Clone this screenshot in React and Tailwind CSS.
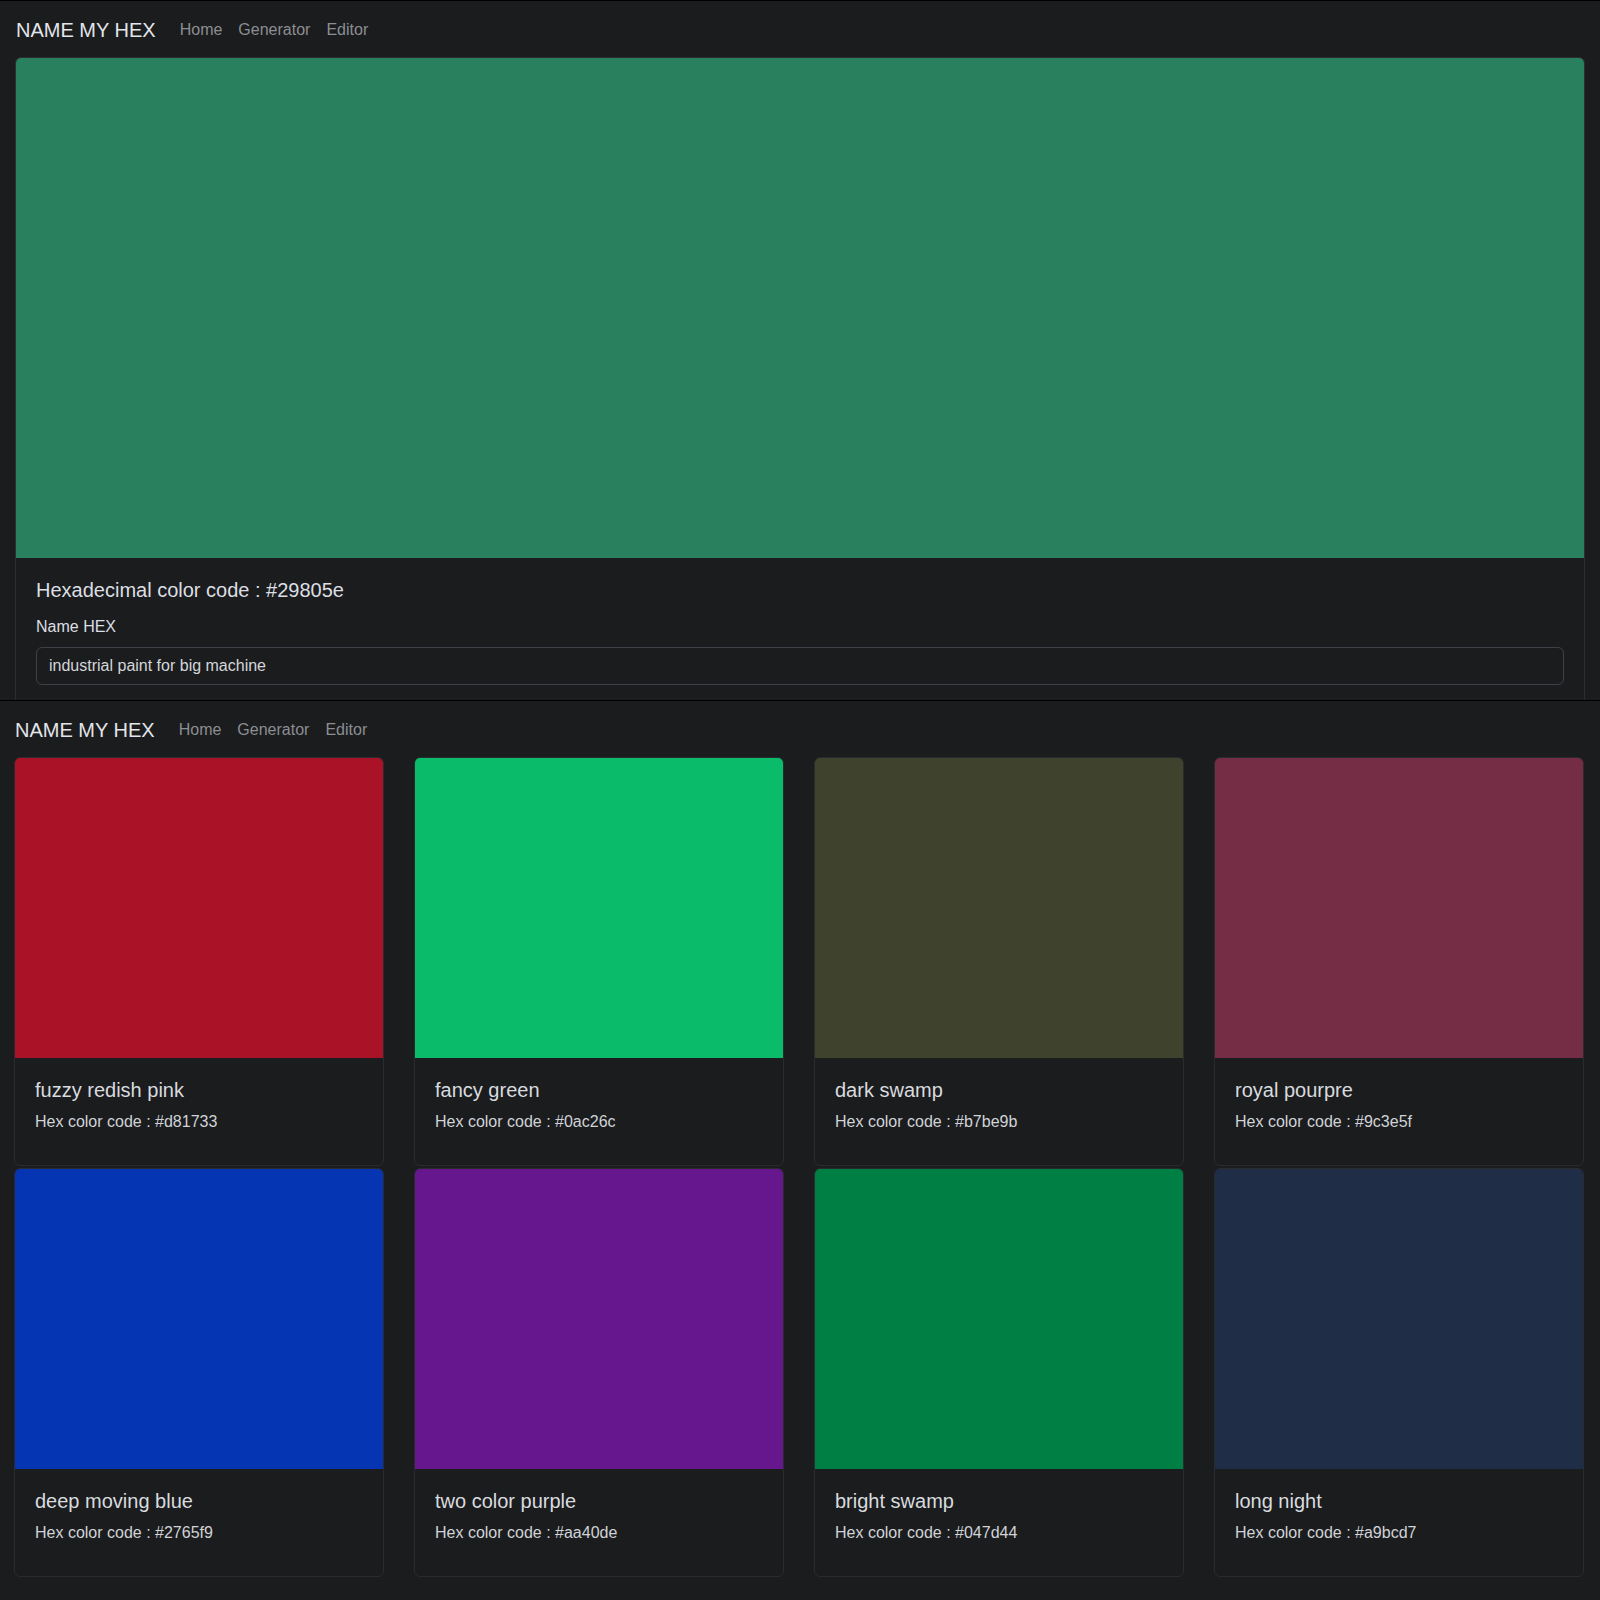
import React from "react";

const cards = [
  { name: "fuzzy redish pink", hex: "#d81733", color: "#aa1228" },
  { name: "fancy green", hex: "#0ac26c", color: "#0abc6a" },
  { name: "dark swamp", hex: "#b7be9b", color: "#3f432e" },
  { name: "royal pourpre", hex: "#9c3e5f", color: "#742d45" },
  { name: "deep moving blue", hex: "#2765f9", color: "#0535b2" },
  { name: "two color purple", hex: "#aa40de", color: "#66178e" },
  { name: "bright swamp", hex: "#047d44", color: "#007f45" },
  { name: "long night", hex: "#a9bcd7", color: "#1f2d46" },
];

function Navbar({ pl }) {
  return (
    <nav className={`h-[56px] flex items-center pt-[1px] ${pl}`}>
      <span className="text-[20px] leading-[30px] text-[#e2e5e9] mr-4">NAME MY HEX</span>
      <a className="px-2 text-[16px] leading-[24px] text-[#8b8e92]">Home</a>
      <a className="px-2 text-[16px] leading-[24px] text-[#8b8e92]">Generator</a>
      <a className="px-2 text-[16px] leading-[24px] text-[#8b8e92]">Editor</a>
    </nav>
  );
}

export default function App() {
  return (
    <div
      className="w-[1600px] h-[1600px] bg-[#1b1c1e] overflow-hidden text-[#d8dbdf]"
      style={{ fontFamily: '"Liberation Sans", Arial, sans-serif' }}
    >
      <section className="h-[700px] border-t border-black overflow-hidden">
        <Navbar pl="pl-4" />
        <div className="px-[15px]">
          <div className="border border-[#2c2d30] rounded-md overflow-hidden bg-[#1b1c1e]">
            <div className="h-[500px] bg-[#29805e]" />
            <div className="px-5 pt-5">
              <h5 className="text-[20px] leading-[24px] mb-[13px] text-[#dcdfe3]">Hexadecimal color code : #29805e</h5>
              <label className="block text-[16px] leading-[24px] mb-2 text-[#dcdfe3]">Name HEX</label>
              <div className="h-[38px] border border-[#3d4147] rounded-md px-3 flex items-center text-[16px] text-[#d3d6da]">
                industrial paint for big machine
              </div>
              <div className="h-[40px]" />
            </div>
          </div>
        </div>
      </section>
      <section className="border-t border-black">
        <Navbar pl="pl-[15px]" />
        <div className="pl-[14px] pr-[16px] grid grid-cols-4 gap-x-[30px] gap-y-[2px]">
          {cards.map((c) => (
            <div key={c.name} className="border border-[#2a2b2e] rounded-md overflow-hidden">
              <div className="h-[300px]" style={{ background: c.color }} />
              <div className="h-[107px] px-5 pt-5">
                <h5 className="text-[20px] leading-[24px] mb-2 text-[#d8dbdf]">{c.name}</h5>
                <p className="text-[16px] leading-[24px] text-[#d0d3d7]">Hex color code : {c.hex}</p>
              </div>
            </div>
          ))}
        </div>
      </section>
    </div>
  );
}
